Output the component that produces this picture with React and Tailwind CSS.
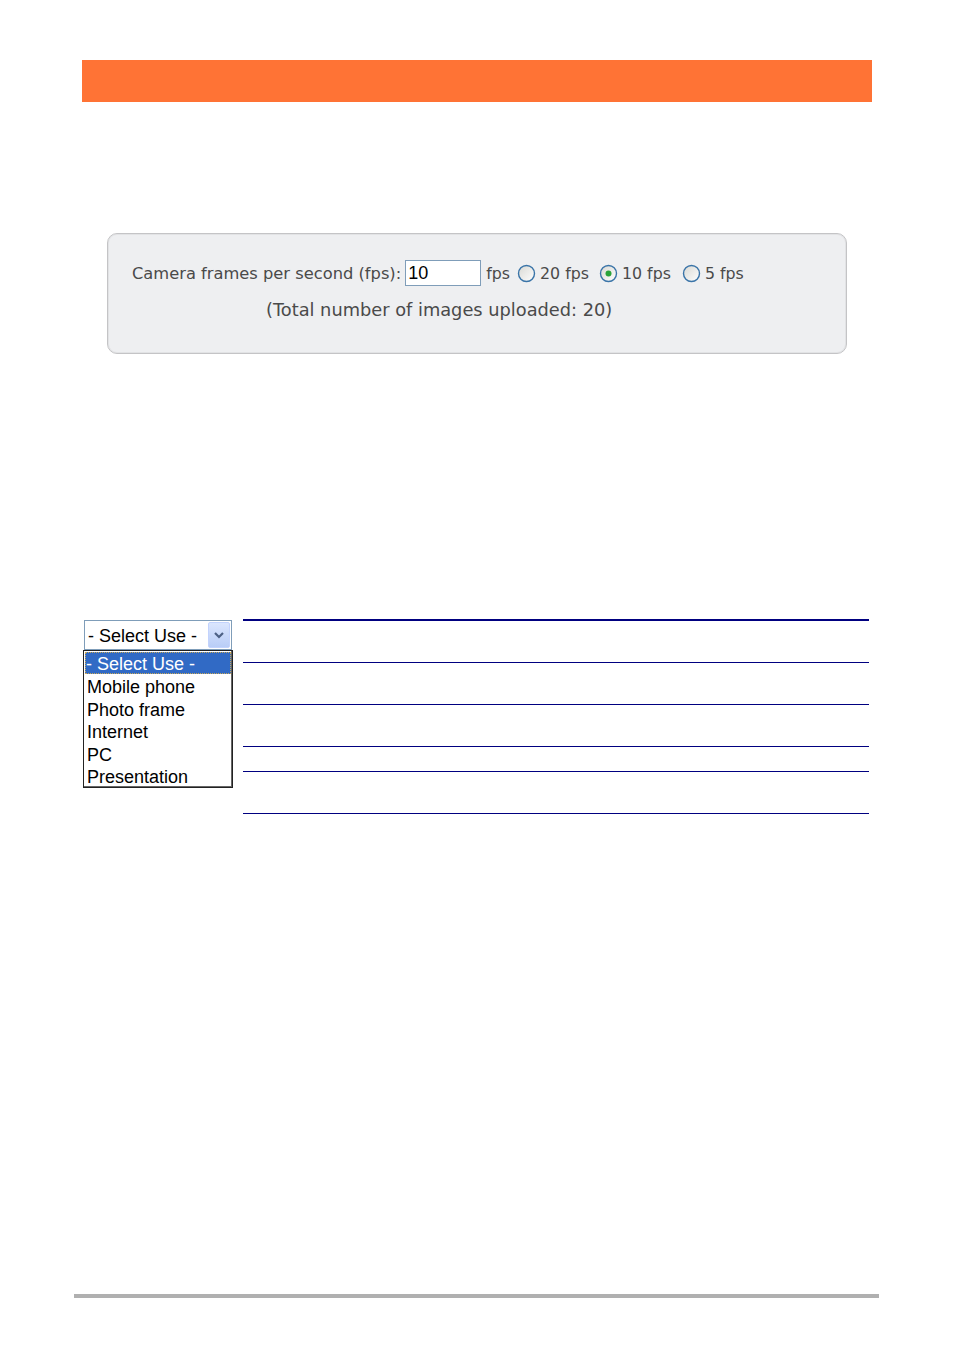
import React from "react";

function Radio({ checked }) {
  return (
    <svg width="19" height="19" viewBox="0 0 19 19" className="shrink-0">
      <defs>
        <linearGradient id={checked ? "rg1" : "rg0"} x1="0" y1="0" x2="1" y2="1">
          <stop offset="0" stopColor="#d8d8d3" />
          <stop offset="1" stopColor="#ffffff" />
        </linearGradient>
      </defs>
      <circle cx="9.5" cy="9.5" r="8" fill={`url(#${checked ? "rg1" : "rg0"})`} stroke="#3a74a8" strokeWidth="1.4" />
      {checked && <circle cx="9.5" cy="9.5" r="3" fill="#2aa33a" />}
    </svg>
  );
}

export default function App() {
  const items = ["Mobile phone", "Photo frame", "Internet", "PC", "Presentation"];
  return (
    <div className="flex flex-col h-[1356px] w-[954px] bg-white">
      <div className="mt-[60px] ml-[82px] w-[790px] h-[42px] bg-[#ff7335]" />

      <div
        className="mt-[131px] ml-[107px] w-[740px] h-[121px] rounded-[10px] border border-[#c4c4c6] bg-[#eeeff1] shadow-[inset_0_0_0_1px_#e2e3e5] text-[#4a4a4a]"
        style={{ fontFamily: '"DejaVu Sans", Verdana, sans-serif' }}
      >
        <div className="flex items-center mt-[26px] ml-[24px] text-[16.3px] leading-[24px]">
          <span className="whitespace-nowrap pt-[2px]">Camera frames per second (fps):</span>
          <div
            className="ml-[4px] w-[76px] h-[26px] border border-[#7f9db9] bg-white flex items-center pl-[2px] text-[18px] text-black"
            style={{ fontFamily: '"Liberation Sans", Arial, sans-serif' }}
          >
            10
          </div>
          <span className="ml-[5px] pt-[2px] text-[15.8px]">fps</span>
          <span className="ml-[7px] flex items-center"><Radio /></span>
          <span className="ml-[4px] pt-[2px] text-[15.8px]">20 fps</span>
          <span className="ml-[10px] flex items-center"><Radio checked /></span>
          <span className="ml-[4px] pt-[2px] text-[15.8px]">10 fps</span>
          <span className="ml-[11px] flex items-center"><Radio /></span>
          <span className="ml-[4px] pt-[2px] text-[15.8px]">5 fps</span>
        </div>
        <div className="mt-[13px] ml-[158px] text-[17.8px] leading-[22px] whitespace-nowrap">
          (Total number of images uploaded: 20)
        </div>
      </div>

      <div
        className="mt-[265px] ml-[83px] flex"
        style={{ fontFamily: '"Liberation Sans", Arial, sans-serif' }}
      >
        <div className="w-[150px] flex flex-col">
          <div className="mx-[1px] mt-[1px] h-[30px] border border-[#7f9db9] bg-white flex items-center justify-between">
            <span className="pl-[3px] pt-[3px] text-[18px] text-black whitespace-nowrap">- Select Use -</span>
            <div className="mr-[1px] w-[22px] h-[26px] rounded-[2px] border border-[#c3d3fd] bg-gradient-to-b from-[#dbe6fe] to-[#b9cdf7] flex items-center justify-center">
              <svg width="12" height="10" viewBox="0 0 12 10">
                <path d="M2 3 L6 7 L10 3" fill="none" stroke="#4d6185" strokeWidth="2.2" />
              </svg>
            </div>
          </div>
          <div className="h-[138px] border border-[#222] bg-white text-[18px] text-black shadow-[inset_-1px_-1px_0_#666]">
            <div className="mx-[1px] mt-[1px] h-[22px] bg-[#316ac5] text-white leading-[20px] pt-[2px] pl-[1px] outline outline-1 outline-dotted outline-[#c8a85a] -outline-offset-1 whitespace-nowrap">
              - Select Use -
            </div>
            <div className="pt-[2px]">
              {items.map((t) => (
                <div key={t} className="pl-[3px] h-[22.6px] leading-[22.6px] whitespace-nowrap">
                  {t}
                </div>
              ))}
            </div>
          </div>
        </div>

        <div className="ml-[10px] w-[626px] flex flex-col">
          <div className="h-[2px] bg-[#000080]" />
          <div className="h-[42px] border-b border-[#000080]" />
          <div className="h-[42px] border-b border-[#000080]" />
          <div className="h-[42px] border-b border-[#000080]" />
          <div className="h-[25px] border-b border-[#000080]" />
          <div className="h-[42px] border-b border-[#000080]" />
        </div>
      </div>

      <div className="mt-auto mb-[58px] ml-[74px] w-[805px] h-[4px] bg-[#b0b0b0]" />
    </div>
  );
}
